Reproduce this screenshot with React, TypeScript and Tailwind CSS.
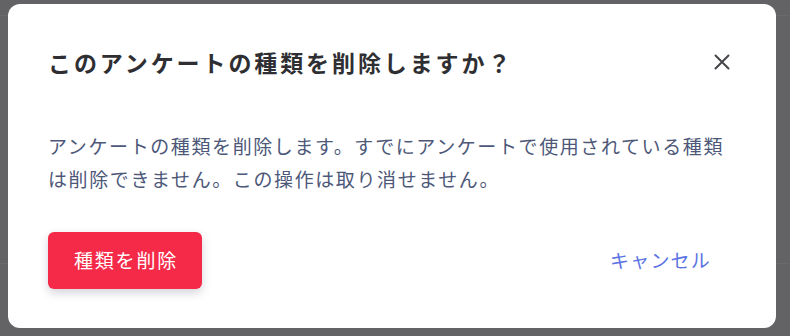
export default function App() {
  return (
    <div className="relative h-[336px] w-[790px] overflow-hidden bg-[#636366] pl-[8px] pt-[4px] font-['Noto_Sans_CJK_JP',sans-serif]">
      <div className="absolute left-0 right-0 top-[15px] h-px bg-[#6a6a6d]" />
      <div className="absolute left-0 right-0 top-[263px] h-px bg-[#6a6a6d]" />
      <div className="relative flex h-[324px] w-[768px] flex-col rounded-[12px] bg-white px-[40px] pb-[39px] pt-[39px]">
        <div className="flex items-center justify-between">
          <h2 className="text-[23px] font-bold leading-[38px] tracking-[2.9px] text-[#2f2f33]">
            このアンケートの種類を削除しますか？
          </h2>
          <button className="mr-[4px] flex h-[20px] w-[20px] items-center justify-center text-[#45454a]">
            <svg width="16" height="16" viewBox="0 0 16 16" fill="none" stroke="currentColor" strokeWidth="2" strokeLinecap="round">
              <path d="M1.5 1.5 14.5 14.5M14.5 1.5 1.5 14.5" />
            </svg>
          </button>
        </div>
        <p className="mt-[48px] text-[19px] leading-[33px] tracking-[1.6px] text-[#4d5879]">
          アンケートの種類を削除します。すでにアンケートで使用されている種類は削除できません。この操作は取り消せません。
        </p>
        <div className="mt-auto flex items-center justify-between">
          <button className="flex h-[57px] items-center rounded-[6px] bg-[#f52a49] pl-[26px] pr-[24px] text-[19px] tracking-[1.8px] text-white shadow-[0_4px_10px_rgba(60,60,90,0.22)]">
            種類を削除
          </button>
          <button className="mr-[25px] text-[19px] tracking-[1.2px] text-[#5b72e4]">
            キャンセル
          </button>
        </div>
      </div>
    </div>
  );
}
